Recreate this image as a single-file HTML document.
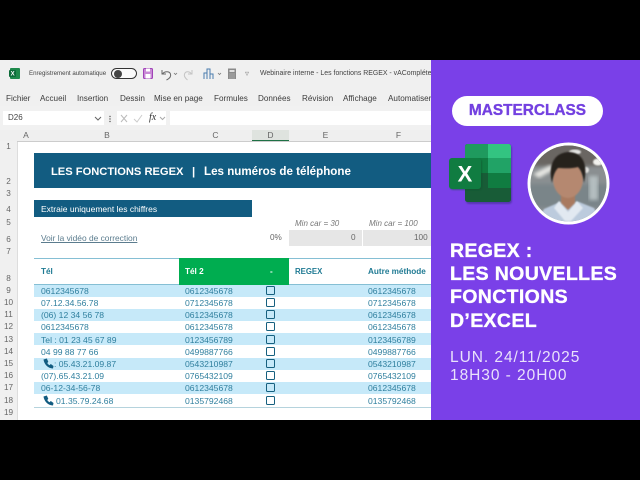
<!DOCTYPE html>
<html><head><meta charset="utf-8"><style>
html,body{margin:0;padding:0;background:#000}
#p{position:relative;width:640px;height:480px;overflow:hidden;background:#000;font-family:"Liberation Sans",sans-serif}
#p div,#p span.a{position:absolute;white-space:nowrap}
.tab{top:93px;font-size:8.15px;color:#3c3c3c;line-height:11px}
.ch{top:130px;height:11px;line-height:11px;font-size:8.5px;color:#666;text-align:center}
.rn{left:0;width:17px;text-align:center;font-size:8.2px;color:#666;line-height:12px}
.c{font-size:8.6px;color:#2f7f9e;line-height:12px}
.h{font-size:8.2px;font-weight:bold;color:#1f7a93;line-height:12px;top:266px}
.cb{left:266px;width:7px;height:7px;border:1px solid #16607f;border-radius:1.5px}
.t{left:450px;color:#fff;font-weight:bold;font-size:19.5px;line-height:23px;letter-spacing:.35px;-webkit-text-stroke:.35px #fff}
</style></head><body><div id="p">
<div style="left:0;top:60px;width:431px;height:360px;background:#fff"></div>
<div style="left:0;top:60px;width:431px;height:50px;background:#f0f0f0"></div>
<div style="left:0;top:106px;width:431px;height:35px;background:#f1f1f1"></div>

<svg style="position:absolute;left:9px;top:68px" width="11" height="11"><rect x="1" y="0" width="10" height="11" rx="1" fill="#1f8a4c"/><rect x="0" y="2" width="7" height="7" rx="1" fill="#0c6b39"/><text x="1.6" y="7.6" font-size="6" font-weight="bold" fill="#fff" font-family="Liberation Sans">X</text></svg>
<div style="left:29px;top:69px;font-size:6.15px;line-height:10px;color:#444">Enregistrement automatique</div>
<div style="left:111px;top:68px;width:24px;height:9px;border:1px solid #333;border-radius:6px;background:#fafafa"></div>
<div style="left:114px;top:69.500px;width:8px;height:8px;border-radius:50%;background:#444"></div>
<svg style="position:absolute;left:142px;top:67px" width="100" height="14" fill="none">
<rect x="1.5" y="1.5" width="9" height="10" rx="1" fill="#c98ad6" stroke="#a044b8"/><rect x="4" y="1.5" width="4" height="3" fill="#fff"/><rect x="3.5" y="7" width="5" height="4.5" fill="#fff"/>
<path d="M20 3v4h4M20.5 7c2-3 7-3 8 0s-2 5-4 6" stroke="#666" stroke-width="1"/><path d="M32 6l1.5 1.5L35 6" stroke="#777" stroke-width=".8"/>
<path d="M50 3v4h-4M49.500 7c-2-3-6-3-7 0s2 5 3 6" stroke="#c4c4c4" stroke-width="1"/>
<path d="M62 12V6h3v6M65 12V2h3v10M68 12V7h3v5" stroke="#4a7cae" stroke-width="1"/><path d="M76 6l1.5 1.5L79 6" stroke="#777" stroke-width=".8"/>
<rect x="86" y="1.5" width="8" height="10.5" fill="#8a8a8a"/><rect x="87.500" y="3" width="5" height="2" fill="#e0e0e0"/><path d="M87.500 7h5M87.500 9h5M87.500 11h5" stroke="#e0e0e0" stroke-width=".8" stroke-dasharray="1 1"/>
</svg>
<div style="left:245px;top:69px;font-size:8px;color:#888">▿</div>
<div style="left:260px;top:69px;font-size:6.95px;line-height:10px;color:#444;width:171px;overflow:hidden">Webinaire interne - Les fonctions REGEX - vACompléter</div>

<div class="tab" style="left:6px">Fichier</div><div class="tab" style="left:40px">Accueil</div><div class="tab" style="left:77px">Insertion</div><div class="tab" style="left:120px">Dessin</div><div class="tab" style="left:154px">Mise en page</div><div class="tab" style="left:214px">Formules</div><div class="tab" style="left:258px">Données</div><div class="tab" style="left:302px">Révision</div><div class="tab" style="left:343px">Affichage</div><div class="tab" style="left:388px;width:43px;overflow:hidden">Automatiser</div>

<div style="left:3px;top:111px;width:101px;height:14px;background:#fff"></div>
<div style="left:8px;top:112px;font-size:8px;line-height:12px;color:#444">D26</div>
<div style="left:117px;top:111px;width:49px;height:14px;background:#fff"></div>
<svg style="position:absolute;left:94px;top:114px" width="80" height="10" fill="none"><path d="M1 3l3 3 3-3" stroke="#666"/><circle cx="16" cy="2.500" r=".7" fill="#555"/><circle cx="16" cy="5" r=".7" fill="#555"/><circle cx="16" cy="7.500" r=".7" fill="#555"/><path d="M27 1l6 7M33 1l-6 7" stroke="#bbb"/><path d="M40 5l3 3 5-7" stroke="#ccc"/><path d="M66 3l2.500 2.500L71 3" stroke="#aaa"/></svg>
<div style="left:149px;top:111px;font-family:'Liberation Serif',serif;font-style:italic;font-size:10px;line-height:14px;color:#333">fx</div>
<div style="left:170px;top:111px;width:261px;height:14px;background:#fff"></div>

<div style="left:0;top:130px;width:431px;height:11px;background:#efefef"></div>
<div style="left:252px;top:130px;width:37px;height:11px;background:#dfe3df;border-bottom:1px solid #1e7145;box-sizing:border-box"></div>
<div class="ch" style="left:17px;width:18px">A</div><div class="ch" style="left:35px;width:144px">B</div><div class="ch" style="left:179px;width:73px">C</div><div class="ch" style="left:252px;width:37px">D</div><div class="ch" style="left:289px;width:73px">E</div><div class="ch" style="left:362px;width:73px">F</div>
<div style="left:0;top:141px;width:17px;height:279px;background:#f0f0f0"></div>
<div style="left:17px;top:141px;width:1px;height:279px;background:#ddd"></div>
<div style="left:17px;top:141px;width:414px;height:1px;background:#ccc"></div>

<div class="rn" style="top:141px">1</div><div class="rn" style="top:176px">2</div><div class="rn" style="top:188px">3</div><div class="rn" style="top:204px">4</div><div class="rn" style="top:217px">5</div><div class="rn" style="top:234px">6</div><div class="rn" style="top:246px">7</div><div class="rn" style="top:273px">8</div>
<div class="rn" style="top:285px">9</div><div class="rn" style="top:297px">10</div><div class="rn" style="top:309px">11</div><div class="rn" style="top:321px">12</div><div class="rn" style="top:334px">13</div><div class="rn" style="top:346px">14</div><div class="rn" style="top:358px">15</div><div class="rn" style="top:370px">16</div><div class="rn" style="top:382px">17</div><div class="rn" style="top:395px">18</div><div class="rn" style="top:407px">19</div>

<div style="left:34px;top:153px;width:397px;height:35px;background:#125c81"></div>
<div style="left:51px;top:164px;font-size:11.15px;font-weight:bold;color:#fff;line-height:16px">LES FONCTIONS REGEX</div>
<div style="left:192px;top:164px;font-size:11.4px;font-weight:bold;color:#fff;line-height:16px">|</div>
<div style="left:204px;top:164px;font-size:11.6px;font-weight:bold;color:#fff;line-height:16px">Les numéros de téléphone</div>
<div style="left:34px;top:200px;width:218px;height:17px;background:#125c81"></div>
<div style="left:41px;top:203px;font-size:8.5px;color:#fff;line-height:12px">Extraie uniquement les chiffres</div>

<div style="left:295px;top:218px;font-size:8px;font-style:italic;color:#777;line-height:12px">Min car = 30</div>
<div style="left:369px;top:218px;font-size:8px;font-style:italic;color:#777;line-height:12px">Min car = 100</div>
<div style="left:41px;top:232px;font-size:8.4px;color:#5b7c8e;line-height:12px;text-decoration:underline">Voir la vidéo de correction</div>
<div style="left:270px;top:232px;font-size:8.2px;color:#666;line-height:12px">0%</div>
<div style="left:289px;top:230px;width:72.500px;height:16px;background:#e6e6e6"></div>
<div style="left:363px;top:230px;width:68px;height:16px;background:#e6e6e6"></div>
<div style="left:351px;top:232px;font-size:8.2px;color:#666;line-height:12px">0</div>
<div style="left:414px;top:232px;font-size:8.2px;color:#666;line-height:12px">100</div>

<div style="left:34px;top:258px;width:397px;height:1px;background:#85bfd4"></div>
<div style="left:34px;top:284px;width:397px;height:1px;background:#85bfd4"></div>
<div style="left:179px;top:258px;width:110px;height:27px;background:#00ad50"></div>
<div class="h" style="left:41px">Tél</div><div class="h" style="left:185px;color:#fff">Tél 2</div><div class="h" style="left:270px;color:#fff">-</div><div class="h" style="left:295px;font-size:7.8px">REGEX</div><div class="h" style="left:368px">Autre méthode</div>

<div style="left:34px;top:285px;width:397px;height:12px;background:#c6e9f9"></div>
<div style="left:34px;top:309px;width:397px;height:12px;background:#c6e9f9"></div>
<div style="left:34px;top:333.400px;width:397px;height:12px;background:#c6e9f9"></div>
<div style="left:34px;top:358px;width:397px;height:12px;background:#c6e9f9"></div>
<div style="left:34px;top:382.400px;width:397px;height:12px;background:#c6e9f9"></div>
<div style="left:34px;top:406.500px;width:397px;height:1px;background:#b5d3dd"></div>

<div class="c" style="left:41px;top:285px">0612345678</div><div class="c" style="left:185px;top:285px">0612345678</div><div class="c" style="left:368px;top:285px">0612345678</div>
<div class="c" style="left:41px;top:297px">07.12.34.56.78</div><div class="c" style="left:185px;top:297px">0712345678</div><div class="c" style="left:368px;top:297px">0712345678</div>
<div class="c" style="left:41px;top:309px">(06) 12 34 56 78</div><div class="c" style="left:185px;top:309px">0612345678</div><div class="c" style="left:368px;top:309px">0612345678</div>
<div class="c" style="left:41px;top:321px">0612345678</div><div class="c" style="left:185px;top:321px">0612345678</div><div class="c" style="left:368px;top:321px">0612345678</div>
<div class="c" style="left:41px;top:334px">Tel : 01 23 45 67 89</div><div class="c" style="left:185px;top:334px">0123456789</div><div class="c" style="left:368px;top:334px">0123456789</div>
<div class="c" style="left:41px;top:346px">04 99 88 77 66</div><div class="c" style="left:185px;top:346px">0499887766</div><div class="c" style="left:368px;top:346px">0499887766</div>
<div class="c" style="left:54px;top:358px">: 05.43.21.09.87</div><div class="c" style="left:185px;top:358px">0543210987</div><div class="c" style="left:368px;top:358px">0543210987</div>
<div class="c" style="left:41px;top:370px">(07).65.43.21.09</div><div class="c" style="left:185px;top:370px">0765432109</div><div class="c" style="left:368px;top:370px">0765432109</div>
<div class="c" style="left:41px;top:382px">06-12-34-56-78</div><div class="c" style="left:185px;top:382px">0612345678</div><div class="c" style="left:368px;top:382px">0612345678</div>
<div class="c" style="left:56px;top:395px">01.35.79.24.68</div><div class="c" style="left:185px;top:395px">0135792468</div><div class="c" style="left:368px;top:395px">0135792468</div>
<svg style="position:absolute;left:43px;top:358px" width="11" height="11"><path d="M.5 1.500L3.800.5 5.300 3.800 4.300 5C4.800 6 5.500 6.700 6.500 7.200L7.800 6 10.500 8 10 10.500C5 10.500 1 6 .5 1.500Z" fill="#125c81"/></svg>
<svg style="position:absolute;left:43px;top:395px" width="11" height="11"><path d="M.5 1.500L3.800.5 5.300 3.800 4.300 5C4.800 6 5.500 6.700 6.500 7.200L7.800 6 10.500 8 10 10.500C5 10.500 1 6 .5 1.500Z" fill="#125c81"/></svg>

<div class="cb" style="top:286px"></div><div class="cb" style="top:298px"></div><div class="cb" style="top:310px"></div><div class="cb" style="top:322px"></div><div class="cb" style="top:335px"></div><div class="cb" style="top:347px"></div><div class="cb" style="top:359px"></div><div class="cb" style="top:371px"></div><div class="cb" style="top:383px"></div><div class="cb" style="top:396px"></div>

<div style="left:431px;top:60px;width:209px;height:360px;background:#7a40e8"></div>
<div style="left:452px;top:96px;width:151px;height:30px;border-radius:15px;background:#fff"></div>
<div style="left:452px;top:96px;width:151px;text-align:center;font-size:15.4px;font-weight:bold;line-height:30px;color:#7340e0;-webkit-text-stroke:.35px #7340e0">MASTERCLASS</div>

<svg style="position:absolute;left:448px;top:143px" width="68" height="62">
<defs><filter id="s"><feGaussianBlur stdDeviation=".8"/></filter></defs>
<rect x="18" y="2" width="46" height="59" rx="3" fill="#2c2a70" opacity=".45" filter="url(#s)"/>
<rect x="17" y="1" width="46" height="58" rx="2.500" fill="#185c37"/>
<path d="M17 3.500A2.500 2.500 0 0 1 19.500 1H40V15H17Z" fill="#1f9a5e"/>
<path d="M40 1H60.500A2.500 2.500 0 0 1 63 3.500V15H40Z" fill="#33c481"/>
<rect x="17" y="15" width="23" height="15" fill="#107c41"/><rect x="40" y="15" width="23" height="15" fill="#21a366"/>
<rect x="40" y="30" width="23" height="15" fill="#107c41"/><rect x="17" y="30" width="23" height="15" fill="#185c37"/>
<rect x="2" y="16" width="32" height="31" rx="3" fill="#0b4f2a" opacity=".5" filter="url(#s)"/>
<rect x="1" y="15" width="32" height="31" rx="3" fill="#107c41"/>
<text x="17" y="38.500" text-anchor="middle" font-size="22" font-weight="bold" fill="#fff" font-family="Liberation Sans">X</text>
</svg>

<svg style="position:absolute;left:527px;top:142px" width="83" height="83" viewBox="0 0 83 83">
<defs><clipPath id="k"><circle cx="41.500" cy="41.500" r="38"/></clipPath><filter id="b"><feGaussianBlur stdDeviation="1.800"/></filter><filter id="b3"><feGaussianBlur stdDeviation=".7"/></filter></defs>
<circle cx="41.500" cy="41.500" r="41" fill="#fff"/>
<g clip-path="url(#k)">
<rect width="83" height="83" fill="#8a8f91"/>
<rect y="0" width="83" height="24" fill="#6a6662" filter="url(#b)"/>
<rect y="42" width="83" height="24" fill="#7a8589" filter="url(#b)"/>
<path d="M6 32L24 23 28 27 12 36Z" fill="#e8e8e4" filter="url(#b)"/>
<ellipse cx="71" cy="20" rx="5" ry="3.500" fill="#f2f2ee" filter="url(#b3)"/>
<ellipse cx="48" cy="10" rx="6" ry="2.500" fill="#e4e4e2" filter="url(#b3)"/>
<ellipse cx="59" cy="28" rx="3" ry="3" fill="#e0e0de" filter="url(#b3)"/>
<rect x="62" y="34" width="9" height="24" fill="#b4bec0" filter="url(#b)"/>
<path d="M8 83L17 67 33 60H52L67 66 76 83Z" fill="#bccbdd" filter="url(#b3)"/>
<path d="M32 59L41 70 50 59 56 66 44 79H38L27 66Z" fill="#e2e9f1" filter="url(#b3)"/>
<path d="M34 48H48V61L41 68 34 61Z" fill="#a97a60" filter="url(#b3)"/>
<ellipse cx="41" cy="37" rx="15" ry="19" fill="#b58870" filter="url(#b3)"/>
<path d="M25 41C21 25 26 11 41 10 57 10 61 24 57 41 56 33 54 28 51 25 44 27 35 26 31 26 28 29 26 34 25 41Z" fill="#26211f" filter="url(#b3)"/>
<path d="M31 33.500h7M44 33.500h7" stroke="#3a2a22" stroke-width="1.600" filter="url(#b3)"/>
<path d="M33 37h4M45 37h4" stroke="#4a342a" stroke-width="1.400" filter="url(#b3)"/>
<path d="M36 47.500h10" stroke="#84544a" stroke-width="1.500" filter="url(#b3)"/>
</g>
</svg>

<div class="t" style="top:240px">REGEX :</div>
<div class="t" style="top:263px">LES NOUVELLES</div>
<div class="t" style="top:286px">FONCTIONS</div>
<div class="t" style="top:310px">D’EXCEL</div>
<div style="left:450px;top:349px;font-size:15.5px;line-height:18px;color:#e9e2fb;letter-spacing:.95px">LUN. 24/11/2025</div>
<div style="left:450px;top:367px;font-size:15.5px;line-height:18px;color:#e9e2fb;letter-spacing:.95px">18H30 - 20H00</div>
</div></body></html>
